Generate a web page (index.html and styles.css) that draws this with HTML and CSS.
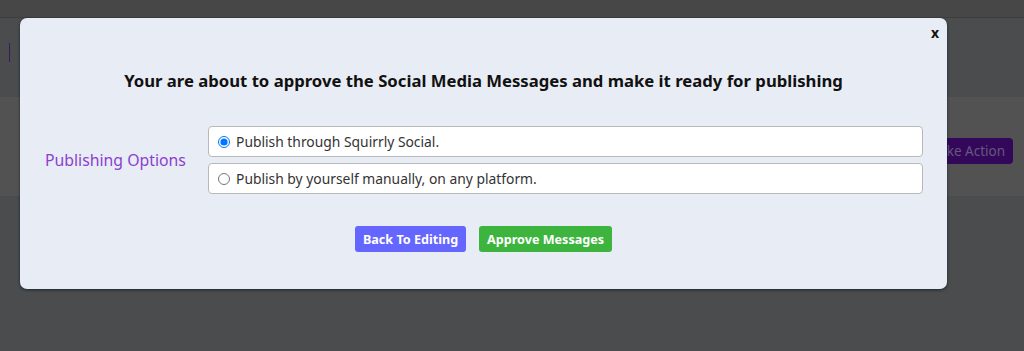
FILE: index.html
```html
<!DOCTYPE html>
<html lang="en">
<head>
  <meta charset="UTF-8" />
  <meta name="viewport" content="width=device-width, initial-scale=1.0" />
  <title>Approve Messages</title>
  <link rel="stylesheet" href="styles.css">
</head>
<body>
  <div class="topbar"></div>
  <div class="page">
    <span class="caret"></span>
    <div class="band">
      <button class="take-action">Take Action</button>
    </div>
  </div>

  <div class="overlay">
    <div class="modal">
      <button class="close">x</button>
      <h2 class="title">Your are about to approve the Social Media Messages and make it ready for publishing</h2>

      <div class="options">
        <div class="options-label">Publishing Options</div>
        <div class="options-list">
          <label class="option">
            <input type="radio" name="publish" checked />
            Publish through Squirrly Social.
          </label>
          <label class="option">
            <input type="radio" name="publish" />
            Publish by yourself manually, on any platform.
          </label>
        </div>
      </div>

      <div class="actions">
        <button class="btn btn-back">Back To Editing</button>
        <button class="btn btn-approve">Approve Messages</button>
      </div>
    </div>
  </div>
</body>
</html>
```

FILE: styles.css
```css
body {
  margin: 0;
  height: 351px;
  overflow: hidden;
  font-family: "Noto Sans", "Open Sans", sans-serif;
  background: #4b4c4d;
  position: relative;
}
.topbar {
  height: 17px;
  background: #474747;
  border-bottom: 1px solid #3e3e3e;
}
.page {
  position: relative;
  padding-top: 79px;
}
.caret {
  position: absolute;
  left: 9px;
  top: 25px;
  width: 1px;
  height: 19px;
  background: #3a1a5c;
}
.band {
  height: 99px;
  box-sizing: border-box;
  background: #525252;
  display: flex;
  justify-content: flex-end;
  align-items: flex-start;
  padding: 41px 11px 0 0;
}
.take-action {
  font-family: inherit;
  font-size: 13.5px;
  background: #33085a;
  color: #66587e;
  border: none;
  border-radius: 4px;
  height: 26px;
  padding: 0 8px;
}
.overlay {
  position: absolute;
  top: 0;
  left: 0;
  right: 0;
  bottom: 0;
}
.modal {
  position: absolute;
  left: 20px;
  top: 18px;
  width: 927px;
  height: 271px;
  box-sizing: border-box;
  background: #e8ecf4;
  border-radius: 7px;
  box-shadow: 0 1px 3px rgba(10, 30, 40, 0.8);
}
.close {
  position: absolute;
  right: 8px;
  top: 5px;
  background: none;
  border: none;
  font-family: inherit;
  font-weight: bold;
  font-size: 14px;
  color: #111;
  padding: 0;
  cursor: pointer;
}
.title {
  margin: 0;
  padding-top: 51px;
  text-align: center;
  font-size: 16.7px;
  font-weight: bold;
  color: #111;
  line-height: 24px;
}
.options {
  display: flex;
  align-items: center;
  margin-top: 33px;
  padding-left: 25px;
}
.options-label {
  width: 163px;
  font-size: 15.8px;
  color: #8a3fd1;
}
.options-list {
  display: flex;
  flex-direction: column;
  gap: 6px;
  width: 715px;
}
.option {
  display: flex;
  align-items: center;
  height: 31px;
  box-sizing: border-box;
  background: #fff;
  border: 1px solid #b9b9b9;
  border-radius: 4px;
  padding-left: 9px;
  font-size: 13.85px;
  color: #333;
}
.option input {
  margin: 1px 6px 0 0;
  width: 12px;
  height: 12px;
}
.actions {
  display: flex;
  justify-content: center;
  gap: 13px;
  margin-top: 32px;
}
.btn {
  font-family: inherit;
  font-size: 12.6px;
  font-weight: bold;
  color: #fff;
  border: none;
  border-radius: 3px;
  height: 26px;
  padding: 0 8px;
}
.btn-back {
  background: #6466ff;
}
.btn-approve {
  background: #3db43e;
}
```
